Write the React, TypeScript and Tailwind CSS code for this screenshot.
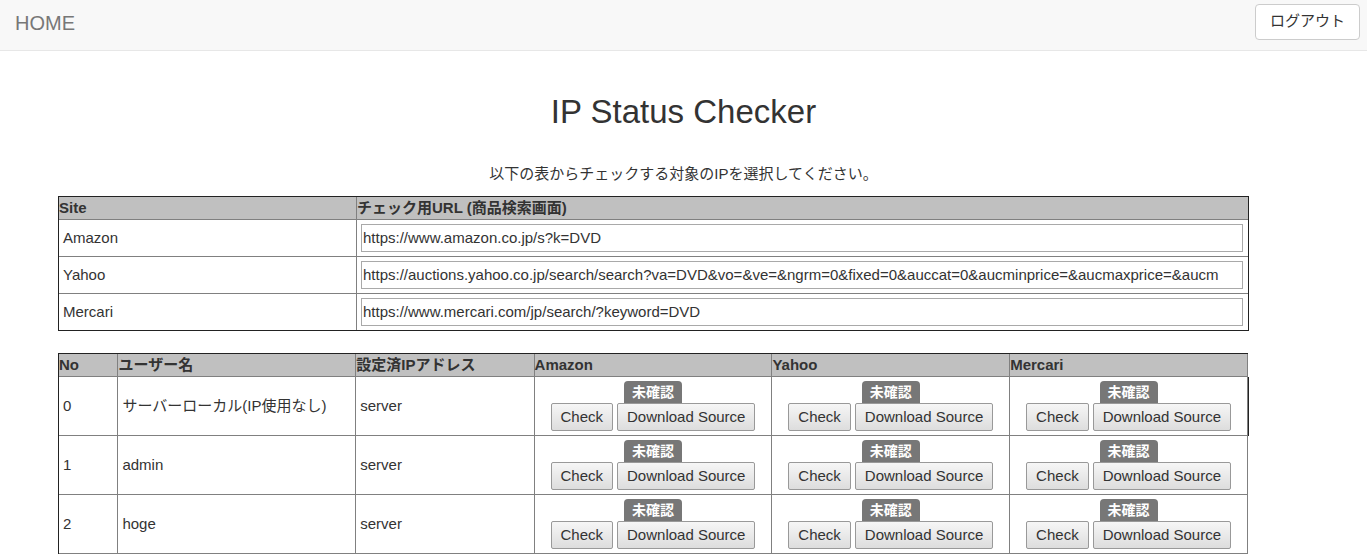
import React from "react";

const sites = [
  { name: "Amazon", url: "https://www.amazon.co.jp/s?k=DVD" },
  {
    name: "Yahoo",
    url: "https://auctions.yahoo.co.jp/search/search?va=DVD&vo=&ve=&ngrm=0&fixed=0&auccat=0&aucminprice=&aucmaxprice=&aucm",
  },
  { name: "Mercari", url: "https://www.mercari.com/jp/search/?keyword=DVD" },
];

const users = [
  { no: 0, name: "サーバーローカル(IP使用なし)", ip: "server" },
  { no: 1, name: "admin", ip: "server" },
  { no: 2, name: "hoge", ip: "server" },
];

function ActionButton({ children }: { children: React.ReactNode }) {
  return (
    <button
      type="button"
      className="h-7 whitespace-nowrap rounded-[2px] border border-[#999] bg-linear-to-b from-[#f6f6f6] to-[#dddddd] px-[9px]"
    >
      {children}
    </button>
  );
}

function StatusCell({ first }: { first: boolean }) {
  return (
    <td
      className={
        first
          ? "border-r border-b border-[#808080] p-1 shadow-[1px_0_0_#222]"
          : "border-r border-b border-[#808080] p-1"
      }
    >
      <div className="flex flex-col items-center">
        <span className="h-[22px] rounded-t-[4px] bg-[#777] px-2 text-sm leading-[22px] font-bold text-white">
          未確認
        </span>
        <div className="flex gap-1">
          <ActionButton>Check</ActionButton>
          <ActionButton>Download Source</ActionButton>
        </div>
      </div>
    </td>
  );
}

export default function App() {
  return (
    <div className="bg-white font-['Liberation_Sans','Noto_Sans_CJK_JP',sans-serif] text-[15px] leading-[22px] text-[#333]">
      <nav className="flex h-[51px] items-start justify-between border-b border-[#e7e7e7] bg-[#f8f8f8] pt-1 pr-[7px] pl-[15px]">
        <a href="#" className="text-[20px] leading-[38px] text-[#777]">
          HOME
        </a>
        <button type="button" className="h-9 rounded-[4px] border border-[#ccc] bg-white px-[14px] pb-0.5">
          ログアウト
        </button>
      </nav>

      <main>
        <h1 className="mt-[43px] text-center text-[33px] leading-9">IP Status Checker</h1>
        <p className="mt-[33px] text-center">以下の表からチェックする対象のIPを選択してください。</p>

        <div className="mt-[11px] pr-[118px] pl-[58px]">
          <table className="w-full table-fixed border-separate border-spacing-0 border border-[#222] text-left">
            <colgroup>
              <col className="w-[298px]" />
              <col />
            </colgroup>
            <thead className="bg-[#c0c0c0]">
              <tr>
                <th className="border-r border-b border-[#808080] p-0">Site</th>
                <th className="border-b border-[#808080] p-0">チェック用URL (商品検索画面)</th>
              </tr>
            </thead>
            <tbody>
              {sites.map((site, i) => {
                const line = i < sites.length - 1 ? "border-b border-[#808080]" : "";
                return (
                  <tr key={site.name}>
                    <td className={`border-r border-[#808080] p-1 ${line}`}>
                      <label htmlFor={`url-${i}`}>{site.name}</label>
                    </td>
                    <td className={`p-1 pr-[5px] ${line}`}>
                      <input
                        id={`url-${i}`}
                        type="text"
                        defaultValue={site.url}
                        className="block h-7 w-full border border-[#a9a9a9] bg-white px-px pb-0.5"
                      />
                    </td>
                  </tr>
                );
              })}
            </tbody>
          </table>

          <div className="mt-[22px] pr-px">
            <table className="w-full table-fixed border-separate border-spacing-0 border-t border-l border-[#222] text-left">
              <colgroup>
                <col className="w-[5%]" />
                <col className="w-[20%]" />
                <col className="w-[15%]" />
                <col className="w-[20%]" />
                <col className="w-[20%]" />
                <col className="w-[20%]" />
              </colgroup>
              <thead className="bg-[#c0c0c0]">
                <tr>
                  {["No", "ユーザー名", "設定済IPアドレス", "Amazon", "Yahoo", "Mercari"].map((title) => (
                    <th key={title} className="border-r border-b border-[#808080] p-0">
                      {title}
                    </th>
                  ))}
                </tr>
              </thead>
              <tbody>
                {users.map((user) => (
                  <tr key={user.no}>
                    <td className="border-r border-b border-[#808080] p-1">{user.no}</td>
                    <td className="border-r border-b border-[#808080] p-1">{user.name}</td>
                    <td className="border-r border-b border-[#808080] p-1">{user.ip}</td>
                    <StatusCell first={false} />
                    <StatusCell first={false} />
                    <StatusCell first={user.no === 0} />
                  </tr>
                ))}
              </tbody>
            </table>
          </div>
        </div>
      </main>
    </div>
  );
}
